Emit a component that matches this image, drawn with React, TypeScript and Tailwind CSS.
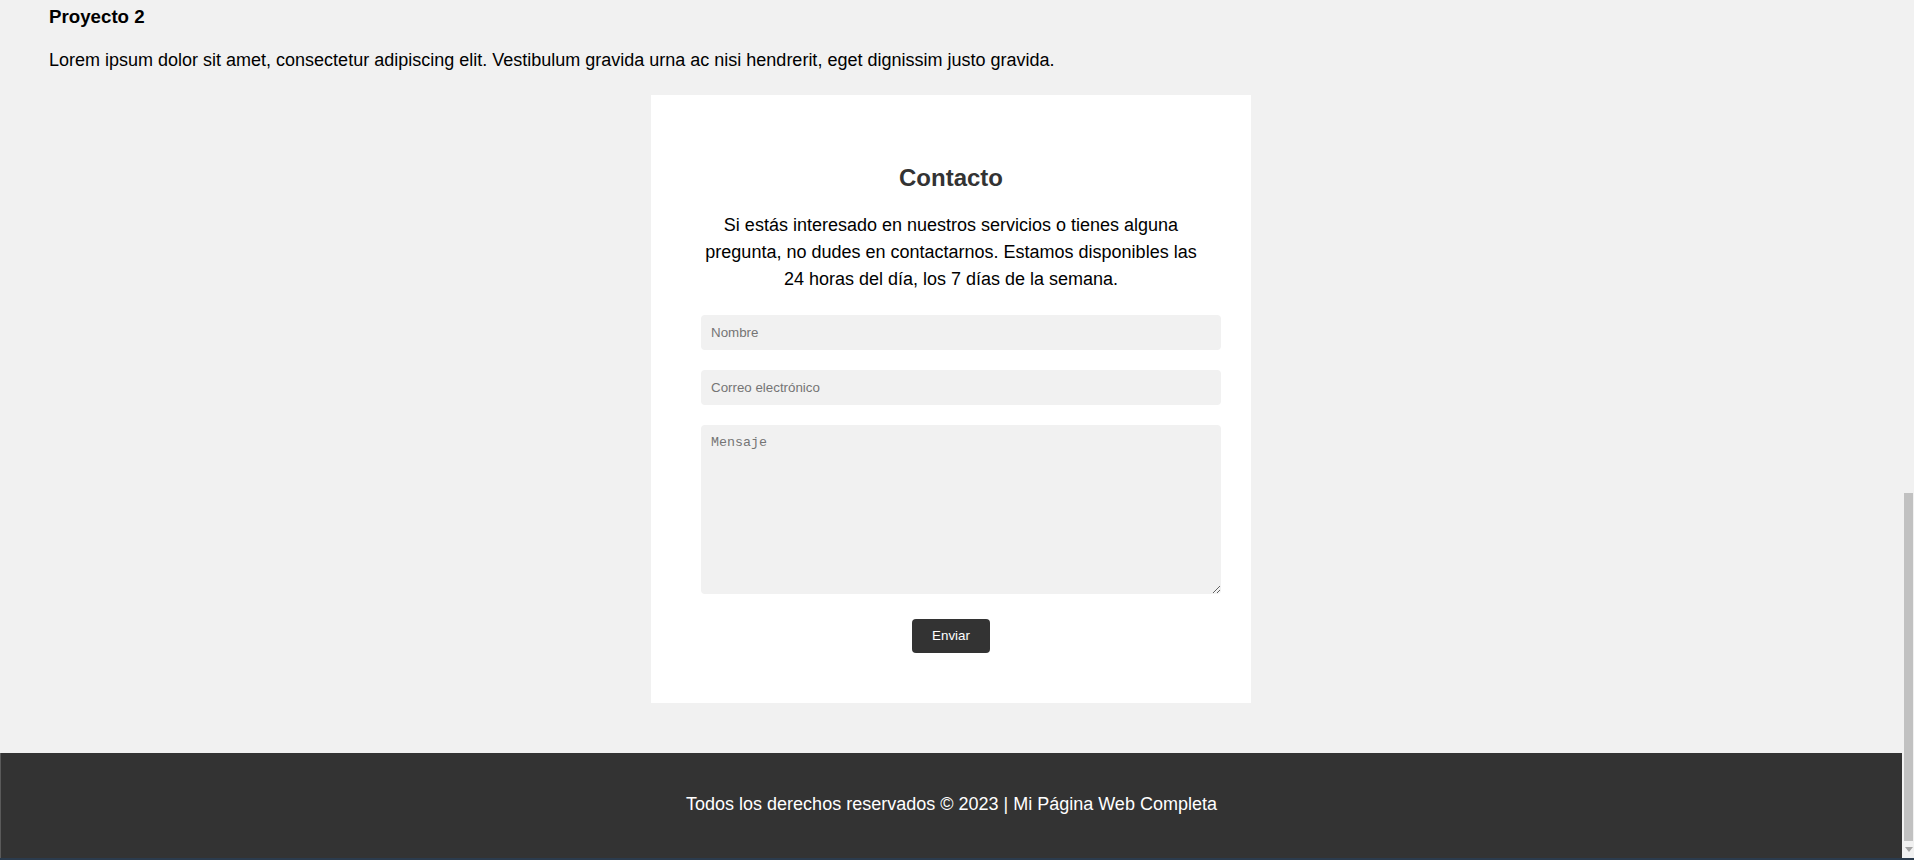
import { useState } from 'react'

const fieldClass =
  'block w-[520px] rounded-[4px] bg-[#f1f1f1] px-[10px] text-[13.33px] text-black outline-none placeholder:text-[#757575]'

function ScrollTrack() {
  return (
    <div className="flex w-[12px] shrink-0 flex-col bg-[#f1f1f1]">
      <div className="h-[493px]" />
      <div className="ml-[2px] h-[348px] w-[9px] bg-[#c1c1c1]" />
      <div className="flex flex-1 items-center justify-center pl-[1px]">
        <svg width="8" height="5" viewBox="0 0 8 5">
          <polygon points="0,0 8,0 4,5" fill="#a3a3a3" />
        </svg>
      </div>
    </div>
  )
}

function ContactCard() {
  const [name, setName] = useState('')
  const [email, setEmail] = useState('')
  const [message, setMessage] = useState('')

  return (
    <section className="mx-auto mt-[24px] w-[600px] bg-white px-[50px] pt-[50px] pb-[50px]">
      <h2 className="mt-[19px] text-center text-[24px] font-bold leading-[28px] text-[#333]">Contacto</h2>
      <p className="mt-[20px] text-center text-[18px] leading-[27px] text-black">
        Si estás interesado en nuestros servicios o tienes alguna pregunta, no dudes en contactarnos. Estamos
        disponibles las 24 horas del día, los 7 días de la semana.
      </p>
      <form className="mt-[22px] flex flex-col" onSubmit={(event) => event.preventDefault()}>
        <input
          className={`${fieldClass} h-[35px]`}
          placeholder="Nombre"
          value={name}
          onChange={(event) => setName(event.target.value)}
        />
        <input
          className={`${fieldClass} mt-[20px] h-[35px]`}
          placeholder="Correo electrónico"
          type="email"
          value={email}
          onChange={(event) => setEmail(event.target.value)}
        />
        <textarea
          className={`${fieldClass} mt-[20px] h-[169px] resize-y py-[10px] font-['Liberation_Mono',monospace] leading-[15px]`}
          placeholder="Mensaje"
          value={message}
          onChange={(event) => setMessage(event.target.value)}
        />
        <div className="mt-[25px] flex justify-center">
          <button
            className="h-[34px] rounded-[4px] bg-[#333] px-[20px] text-[13.33px] text-white"
            type="submit"
          >
            Enviar
          </button>
        </div>
      </form>
    </section>
  )
}

export default function App() {
  return (
    <div className="flex h-[860px] w-full flex-col overflow-hidden bg-[#f1f1f1] font-['Liberation_Sans',Arial,sans-serif]">
      <div className="flex h-[858px]">
        <div className="flex flex-1 flex-col">
          <main className="flex-1">
            <div className="px-[49px] pt-[6px]">
              <h3 className="text-[18.72px] font-bold leading-[22px] text-black">Proyecto 2</h3>
              <p className="mt-[22px] text-[18px] leading-[21px] text-black">
                Lorem ipsum dolor sit amet, consectetur adipiscing elit. Vestibulum gravida urna ac nisi hendrerit,
                eget dignissim justo gravida.
              </p>
            </div>
            <ContactCard />
          </main>
          <footer className="h-[105px] border-l border-[#5a5a5a] bg-[#333] pt-[40px] text-center text-[18px] leading-[22px] text-white">
            Todos los derechos reservados © 2023 | Mi Página Web Completa
          </footer>
        </div>
        <ScrollTrack />
      </div>
      <div className="h-[2px] bg-[#2b3b4d]" />
    </div>
  )
}
